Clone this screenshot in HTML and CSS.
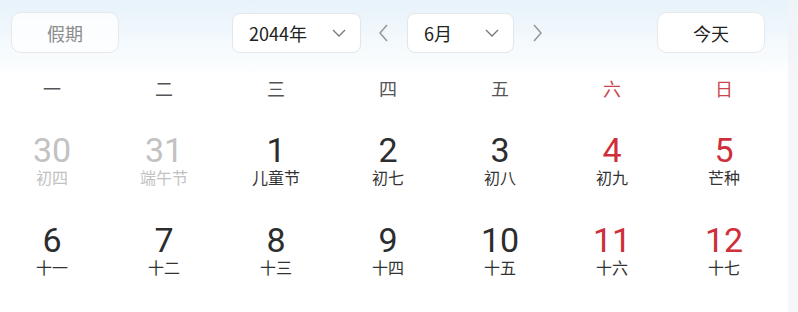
FILE: index.html
```html
<!DOCTYPE html>
<html lang="zh-CN">
<head>
    <meta charset="UTF-8">
    <meta name="viewport" content="width=device-width, initial-scale=1.0">
    <title>万年历</title>
    <link rel="stylesheet" href="styles.css">
</head>
<body>
    <div class="app">
        <div class="main">
            <div class="toolbar">
                <button class="btn btn-holiday">假期</button>
                <div class="select select-year">
                    <span>2044年</span>
                    <svg class="chevron" width="14" height="8" viewBox="0 0 14 8"><path d="M1 1l6 6 6-6" fill="none" stroke="#777" stroke-width="1.3"/></svg>
                </div>
                <span class="arrow arrow-prev">
                    <svg width="10" height="18" viewBox="0 0 10 18"><path d="M8 1L1 9l7 8" fill="none" stroke="#999" stroke-width="1.6"/></svg>
                </span>
                <div class="select select-month">
                    <span>6月</span>
                    <svg class="chevron" width="14" height="8" viewBox="0 0 14 8"><path d="M1 1l6 6 6-6" fill="none" stroke="#777" stroke-width="1.3"/></svg>
                </div>
                <span class="arrow arrow-next">
                    <svg width="10" height="18" viewBox="0 0 10 18"><path d="M2 1l7 8-7 8" fill="none" stroke="#999" stroke-width="1.6"/></svg>
                </span>
                <button class="btn btn-today">今天</button>
            </div>

            <div class="weekdays">
                <div>一</div>
                <div>二</div>
                <div>三</div>
                <div>四</div>
                <div>五</div>
                <div class="weekend">六</div>
                <div class="weekend">日</div>
            </div>

            <div class="days">
                <div class="day other"><span class="num">30</span><span class="lunar">初四</span></div>
                <div class="day other"><span class="num">31</span><span class="lunar">端午节</span></div>
                <div class="day"><span class="num">1</span><span class="lunar">儿童节</span></div>
                <div class="day"><span class="num">2</span><span class="lunar">初七</span></div>
                <div class="day"><span class="num">3</span><span class="lunar">初八</span></div>
                <div class="day weekend"><span class="num">4</span><span class="lunar">初九</span></div>
                <div class="day weekend"><span class="num">5</span><span class="lunar">芒种</span></div>

                <div class="day"><span class="num">6</span><span class="lunar">十一</span></div>
                <div class="day"><span class="num">7</span><span class="lunar">十二</span></div>
                <div class="day"><span class="num">8</span><span class="lunar">十三</span></div>
                <div class="day"><span class="num">9</span><span class="lunar">十四</span></div>
                <div class="day"><span class="num">10</span><span class="lunar">十五</span></div>
                <div class="day weekend"><span class="num">11</span><span class="lunar">十六</span></div>
                <div class="day weekend"><span class="num">12</span><span class="lunar">十七</span></div>
            </div>
        </div>
        <div class="side"></div>
    </div>
</body>
</html>
```

FILE: styles.css
```css
body{
    margin: 0;
    padding: 0;
    font-family: "Noto Sans CJK SC", "Noto Sans", sans-serif;
    color: #222;
    overflow: hidden;
}
.app{
    display: flex;
    height: 312px;
}
.main{
    width: 788px;
    background: linear-gradient(180deg, #e7f2fa 0px, #f3f9fd 40px, #ffffff 78px);
}
.side{
    flex: 1;
    background: linear-gradient(180deg, #eef4f8 0px, #f5f6f8 78px);
}
.toolbar{
    display: flex;
    align-items: center;
    padding: 12px 0 0 11px;
    height: 41px;
}
.btn{
    font-family: inherit;
    font-size: 18px;
    height: 41px;
    width: 108px;
    border: 1px solid #e6e9ec;
    border-radius: 10px;
    background: rgba(255, 255, 255, 0.75);
    padding: 0;
}
.btn-holiday{
    color: #8c8c8c;
}
.btn-today{
    color: #222;
    margin-left: 97px;
    background: #fff;
}
.select{
    display: flex;
    align-items: center;
    justify-content: space-between;
    box-sizing: border-box;
    height: 40px;
    padding: 0 14px 0 16px;
    background: #fff;
    border: 1px solid #e3e6e9;
    border-radius: 8px;
    font-size: 18px;
}
.select-year{
    width: 129px;
    margin-left: 113px;
}
.select-month{
    width: 107px;
}
.arrow{
    display: flex;
    align-items: center;
    justify-content: center;
    width: 46px;
    height: 40px;
}
.weekdays{
    display: grid;
    grid-template-columns: repeat(7, 112px);
    margin: 23px 0 0 -4px;
    font-size: 18px;
    line-height: 24px;
    color: #555;
    text-align: center;
}
.weekdays .weekend{
    color: #c9464b;
}
.days{
    display: grid;
    grid-template-columns: repeat(7, 112px);
    grid-auto-rows: 90px;
    margin: 32px 0 0 -4px;
}
.day{
    display: flex;
    flex-direction: column;
    align-items: center;
}
.num{
    font-family: Roboto, "Noto Sans", sans-serif;
    font-size: 34px;
    font-weight: 400;
    line-height: 36px;
    color: #2b2d2f;
}
.lunar{
    font-size: 16px;
    line-height: 18px;
    color: #333;
}
.day.weekend .num{
    color: #cf2f3a;
}
.day.other .num,
.day.other .lunar{
    color: #c2c2c2;
}
```
